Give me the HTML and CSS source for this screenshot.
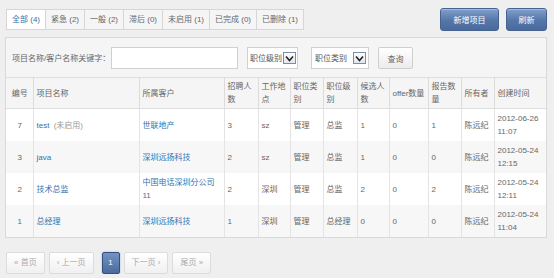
FILE: index.html
```html
<!DOCTYPE html>
<html>
<head>
  <title>项目列表</title>
  <link rel="stylesheet" href="styles.css">
</head>
<body>
  <div class="page">
    <div class="toolbar">
      <ul class="tabs">
        <li class="active"><a href="#">全部 (4)</a></li>
        <li><a href="#">紧急 (2)</a></li>
        <li><a href="#">一般 (2)</a></li>
        <li><a href="#">滞后 (0)</a></li>
        <li><a href="#">未启用 (1)</a></li>
        <li><a href="#">已完成 (0)</a></li>
        <li><a href="#">已删除 (1)</a></li>
      </ul>
      <div class="actions">
        <button class="btn-blue add">新增项目</button>
        <button class="btn-blue refresh">刷新</button>
      </div>
    </div>

    <div class="panel">
      <div class="search">
        <label for="keyword">项目名称/客户名称关键字：</label>
        <input type="text" id="keyword">
        <div class="select level">
          <span>职位级别</span>
          <span class="arrow"><svg width="11" height="9" viewBox="0 0 11 9"><polyline points="2,2.5 5.5,6.5 9,2.5" fill="none" stroke="#222" stroke-width="1.6"/></svg></span>
        </div>
        <div class="select type">
          <span>职位类别</span>
          <span class="arrow"><svg width="11" height="9" viewBox="0 0 11 9"><polyline points="2,2.5 5.5,6.5 9,2.5" fill="none" stroke="#222" stroke-width="1.6"/></svg></span>
        </div>
        <button class="btn query">查询</button>
      </div>

      <table class="list">
        <colgroup>
          <col style="width:27px">
          <col style="width:106px">
          <col style="width:85px">
          <col style="width:34px">
          <col style="width:32px">
          <col style="width:33px">
          <col style="width:34px">
          <col style="width:32px">
          <col style="width:39px">
          <col style="width:33px">
          <col style="width:33px">
          <col>
        </colgroup>
        <thead>
          <tr>
            <th class="num">编号</th>
            <th>项目名称</th>
            <th>所属客户</th>
            <th>招聘人数</th>
            <th>工作地点</th>
            <th>职位类别</th>
            <th>职位级别</th>
            <th>候选人数</th>
            <th class="nowrap">offer数量</th>
            <th>报告数量</th>
            <th>所有者</th>
            <th>创建时间</th>
          </tr>
        </thead>
        <tbody>
          <tr>
            <td class="num">7</td>
            <td><a href="#">test</a> <span class="muted">(未启用)</span></td>
            <td><a href="#">世联地产</a></td>
            <td>3</td>
            <td>sz</td>
            <td>管理</td>
            <td>总监</td>
            <td>1</td>
            <td>0</td>
            <td>1</td>
            <td>陈远纪</td>
            <td>2012-06-26<br>11:07</td>
          </tr>
          <tr>
            <td class="num">3</td>
            <td><a href="#">java</a></td>
            <td><a href="#">深圳远扬科技</a></td>
            <td>2</td>
            <td>sz</td>
            <td>管理</td>
            <td>总监</td>
            <td>1</td>
            <td>0</td>
            <td>0</td>
            <td>陈远纪</td>
            <td>2012-05-24<br>12:15</td>
          </tr>
          <tr>
            <td class="num">2</td>
            <td><a href="#">技术总监</a></td>
            <td><a href="#">中国电话深圳分公司<br>11</a></td>
            <td>2</td>
            <td>深圳</td>
            <td>管理</td>
            <td>总监</td>
            <td>2</td>
            <td>0</td>
            <td>2</td>
            <td>陈远纪</td>
            <td>2012-05-24<br>12:11</td>
          </tr>
          <tr>
            <td class="num">1</td>
            <td><a href="#">总经理</a></td>
            <td><a href="#">深圳远扬科技</a></td>
            <td>1</td>
            <td>深圳</td>
            <td>管理</td>
            <td>总经理</td>
            <td>0</td>
            <td>0</td>
            <td>0</td>
            <td>陈远纪</td>
            <td>2012-05-24<br>11:04</td>
          </tr>
        </tbody>
      </table>
    </div>

    <div class="pager">
      <span class="disabled">« 首页</span>
      <span class="disabled">‹ 上一页</span>
      <span class="current">1</span>
      <span class="disabled">下一页 ›</span>
      <span class="disabled">尾页 »</span>
    </div>
  </div>
</body>
</html>
```

FILE: styles.css
```css
body {
  margin: 0;
  background-color: #efefef;
  font-family: "Liberation Sans", "Noto Sans CJK SC", sans-serif;
  font-size: 8px;
  line-height: 13px;
  color: #666;
}

a {
  color: #3572ad;
  text-decoration: none;
}

.page {
  padding: 8px 7px 0 5px;
}

/* top bar: filter tabs + actions */
.toolbar {
  display: flex;
  justify-content: space-between;
  align-items: flex-start;
  height: 29px;
}

.tabs {
  display: flex;
  margin: 1px 0 0 1px;
  padding: 0;
  list-style: none;
}

.tabs li {
  border: 1px solid #d6d6d6;
  border-left: none;
  background-color: #f5f5f5;
}

.tabs li:first-child {
  border-left: 1px solid #d6d6d6;
}

.tabs li a {
  display: block;
  padding: 0 5px;
  line-height: 19px;
  color: #666;
}

.tabs li.active {
  background-color: #fff;
}

.tabs li.active a {
  color: #3572ad;
}

.actions {
  display: flex;
  gap: 7px;
}

.btn-blue {
  height: 23px;
  padding: 0;
  border: 1px solid #46628f;
  border-radius: 3px;
  background: linear-gradient(#819fcc, #5576a9 55%, #4a6a9d);
  color: #fff;
  font-family: inherit;
  font-size: 8px;
  box-shadow: inset 0 1px 0 rgba(255, 255, 255, 0.3);
  cursor: pointer;
}

.btn-blue.add {
  width: 59px;
}

.btn-blue.refresh {
  width: 41px;
}

/* search + list panel */
.panel {
  border: 1px solid #d9d9d9;
  background-color: #f5f5f5;
}

.search {
  display: flex;
  align-items: center;
  padding: 9px 6px 8px;
  white-space: nowrap;
}

.search label {
  width: 99px;
}

.search input {
  width: 127px;
  height: 22px;
  box-sizing: border-box;
  margin: 0;
  border: 1px solid #d0d0d0;
  background-color: #fff;
}

.select {
  display: flex;
  justify-content: space-between;
  align-items: center;
  flex-shrink: 0;
  height: 22px;
  box-sizing: border-box;
  padding: 0 1px 0 3px;
  border: 1px solid #d0d0d0;
  background-color: #fff;
  color: #555;
}

.select.level {
  width: 51px;
  margin-left: 9px;
  padding-left: 2px;
}

.select.type {
  width: 58px;
  margin-left: 13px;
  padding-right: 2px;
}

.select .arrow {
  display: flex;
  align-items: center;
  justify-content: center;
  flex-shrink: 0;
  width: 13px;
  height: 12px;
  box-sizing: border-box;
  border: 1px solid #7b8ea8;
  background: linear-gradient(#fdfdfd, #e2e6ee);
}

.btn {
  width: 35px;
  height: 22px;
  margin-left: 9px;
  padding: 0;
  border: 1px solid #cfcfcf;
  border-radius: 2px;
  background: linear-gradient(#fff, #ececec);
  color: #666;
  font-family: inherit;
  font-size: 8px;
}

.list {
  width: 100%;
  table-layout: fixed;
  border-collapse: collapse;
}

.list th,
.list td {
  padding: 0 2px 0 3px;
  text-align: left;
  vertical-align: middle;
  font-weight: normal;
  border-right: 1px solid #e4e4e4;
}

.list th:last-child,
.list td:last-child {
  border-right: none;
}

.list th {
  height: 30px;
  border-top: 1px solid #dedede;
  border-bottom: 1px solid #dedede;
  border-right-color: #dcdcdc;
}

.list td {
  height: 32px;
}

.list tbody tr:nth-child(odd) {
  background-color: #fff;
}

.list tbody tr:nth-child(even) {
  background-color: #f7f7f7;
}

.list .num {
  text-align: center;
}

.list .nowrap {
  white-space: nowrap;
}

.muted {
  color: #9a9a9a;
  margin-left: 2px;
}

/* pagination */
.pager {
  display: flex;
  gap: 4px;
  margin-top: 14px;
  padding-left: 1px;
}

.pager span {
  height: 22px;
  box-sizing: border-box;
  padding: 0 7px;
  line-height: 20px;
  border: 1px solid #dcdcdc;
  border-radius: 2px;
  background: linear-gradient(#fff, #f0f0f0);
}

.pager .disabled {
  color: #aaa;
}

.pager .current {
  width: 18px;
  padding: 0;
  margin: 0 0 0 4px;
  text-align: center;
  color: #fff;
  border-color: #34507e;
  background: linear-gradient(#7393c4, #4b6b9f);
  box-shadow: 0 0 2px #9fb6d8;
}
```
